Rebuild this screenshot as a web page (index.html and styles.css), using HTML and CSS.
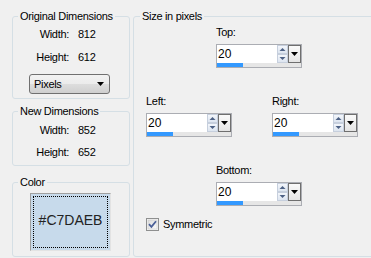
FILE: index.html
```html
<!DOCTYPE html>
<html lang="en">
  <head>
    <meta charset="UTF-8" />
    <title>Add Borders</title>
    <link rel="stylesheet" href="styles.css">
  </head>
  <body>
    <div class="dialog">
      <div class="left-column">
        <div class="group group-original">
          <span class="group-title">Original Dimensions</span>
          <div class="dims">
            <span class="dim-label">Width:</span><span>812</span>
            <span class="dim-label">Height:</span><span>612</span>
          </div>
          <div class="select">
            <span>Pixels</span>
            <svg width="7" height="4" viewBox="0 0 7 4"><path d="M0 0 H7 L3.5 4 Z" fill="#000"/></svg>
          </div>
        </div>

        <div class="group group-new">
          <span class="group-title">New Dimensions</span>
          <div class="dims dims-tight">
            <span class="dim-label">Width:</span><span>852</span>
            <span class="dim-label">Height:</span><span>652</span>
          </div>
        </div>

        <div class="group group-color">
          <span class="group-title">Color</span>
          <div class="swatch">
            <div class="swatch-focus">#C7DAEB</div>
          </div>
        </div>
      </div>

      <div class="group group-size">
        <span class="group-title">Size in pixels</span>

        <div class="field-row row-center">
          <div class="field">
            <label class="field-label">Top:</label>
            <div class="spin">
              <span class="spin-value">20</span>
              <div class="spin-buttons">
                <span class="spin-btn"><svg width="9" height="7" viewBox="0 0 9 7"><path d="M1.5 5 L4.5 2 L7.5 5 Z" fill="#4d6185"/></svg></span>
                <span class="spin-btn"><svg width="9" height="7" viewBox="0 0 9 7"><path d="M1.5 2 L4.5 5 L7.5 2 Z" fill="#4d6185"/></svg></span>
              </div>
              <span class="spin-drop"><svg width="7" height="4" viewBox="0 0 7 4"><path d="M0 0 H7 L3.5 4 Z" fill="#000"/></svg></span>
              <div class="spin-bar"><div class="spin-bar-fill"></div></div>
            </div>
          </div>
        </div>

        <div class="field-row row-sides">
          <div class="field">
            <label class="field-label">Left:</label>
            <div class="spin">
              <span class="spin-value">20</span>
              <div class="spin-buttons">
                <span class="spin-btn"><svg width="9" height="7" viewBox="0 0 9 7"><path d="M1.5 5 L4.5 2 L7.5 5 Z" fill="#4d6185"/></svg></span>
                <span class="spin-btn"><svg width="9" height="7" viewBox="0 0 9 7"><path d="M1.5 2 L4.5 5 L7.5 2 Z" fill="#4d6185"/></svg></span>
              </div>
              <span class="spin-drop"><svg width="7" height="4" viewBox="0 0 7 4"><path d="M0 0 H7 L3.5 4 Z" fill="#000"/></svg></span>
              <div class="spin-bar"><div class="spin-bar-fill"></div></div>
            </div>
          </div>
          <div class="field">
            <label class="field-label">Right:</label>
            <div class="spin">
              <span class="spin-value">20</span>
              <div class="spin-buttons">
                <span class="spin-btn"><svg width="9" height="7" viewBox="0 0 9 7"><path d="M1.5 5 L4.5 2 L7.5 5 Z" fill="#4d6185"/></svg></span>
                <span class="spin-btn"><svg width="9" height="7" viewBox="0 0 9 7"><path d="M1.5 2 L4.5 5 L7.5 2 Z" fill="#4d6185"/></svg></span>
              </div>
              <span class="spin-drop"><svg width="7" height="4" viewBox="0 0 7 4"><path d="M0 0 H7 L3.5 4 Z" fill="#000"/></svg></span>
              <div class="spin-bar"><div class="spin-bar-fill"></div></div>
            </div>
          </div>
        </div>

        <div class="field-row row-center row-bottom">
          <div class="field">
            <label class="field-label">Bottom:</label>
            <div class="spin">
              <span class="spin-value">20</span>
              <div class="spin-buttons">
                <span class="spin-btn"><svg width="9" height="7" viewBox="0 0 9 7"><path d="M1.5 5 L4.5 2 L7.5 5 Z" fill="#4d6185"/></svg></span>
                <span class="spin-btn"><svg width="9" height="7" viewBox="0 0 9 7"><path d="M1.5 2 L4.5 5 L7.5 2 Z" fill="#4d6185"/></svg></span>
              </div>
              <span class="spin-drop"><svg width="7" height="4" viewBox="0 0 7 4"><path d="M0 0 H7 L3.5 4 Z" fill="#000"/></svg></span>
              <div class="spin-bar"><div class="spin-bar-fill"></div></div>
            </div>
          </div>
        </div>

        <div class="check-row">
          <svg class="checkbox" width="13" height="13" viewBox="0 0 13 13">
            <defs>
              <linearGradient id="cbFill" x1="0" y1="0" x2="1" y2="1">
                <stop offset="0" stop-color="#dcdcdc"/>
                <stop offset="1" stop-color="#fafafa"/>
              </linearGradient>
            </defs>
            <rect x="0.5" y="0.5" width="12" height="12" fill="#f4f4f4" stroke="#8e8f8f"/>
            <rect x="2" y="2" width="9" height="9" fill="url(#cbFill)" stroke="#c2c2c2" stroke-width="0.5"/>
            <path d="M3 6.2 L5.4 8.8 L10 3.2" fill="none" stroke="#4a5f97" stroke-width="1.8"/>
          </svg>
          <span>Symmetric</span>
        </div>
      </div>
    </div>
  </body>
</html>
```

FILE: styles.css
```css
body {
  margin: 0;
  width: 371px;
  height: 258px;
  overflow: hidden;
  background-color: #f0f0f0;
  font-family: "Liberation Sans", Arial, sans-serif;
  font-size: 11px;
  letter-spacing: -0.3px;
  color: #000;
}

.dialog {
  display: flex;
  gap: 3px;
  padding: 16px 0 0 12px;
}

.left-column {
  display: flex;
  flex-direction: column;
  width: 118px;
  flex-shrink: 0;
}

/* Group boxes */
.group {
  box-sizing: border-box;
  display: flex;
  flex-direction: column;
  border: 1px solid #d5dfe5;
  border-radius: 3px;
}

.group-title {
  align-self: flex-start;
  margin: -7px 0 0 5px;
  padding: 0 2px;
  line-height: 13px;
  background-color: #f0f0f0;
}

.group-original {
  height: 83px;
}

.group-new {
  height: 55px;
  margin-top: 12px;
}

.group-color {
  height: 75px;
  margin-top: 16px;
}

.group-size {
  width: 250px;
  height: 241px;
  flex-shrink: 0;
}

.group-size .group-title {
  margin-left: 6px;
}

/* Dimension rows */
.dims {
  display: grid;
  grid-template-columns: 56px auto;
  column-gap: 9px;
  row-gap: 10px;
  margin-top: 5px;
  line-height: 13px;
}

.dims-tight {
  row-gap: 9px;
  margin-top: 6px;
}

.dim-label {
  text-align: right;
}

.select {
  box-sizing: border-box;
  display: flex;
  align-items: center;
  justify-content: space-between;
  width: 81px;
  height: 20px;
  margin: 10px 0 0 16px;
  padding: 0 5px 0 4px;
  border: 1px solid #707070;
  border-radius: 3px;
  background: linear-gradient(#f2f2f2 0%, #ebebeb 50%, #dddddd 51%, #cfcfcf 100%);
}

/* Color swatch */
.swatch {
  box-sizing: border-box;
  width: 81px;
  height: 58px;
  margin: 4px 0 0 17px;
  padding: 2px;
  border: 1px solid #a0a0a0;
  border-right-color: #e3e3e3;
  border-bottom-color: #e3e3e3;
  background-color: #c7daeb;
}

.swatch-focus {
  display: flex;
  align-items: center;
  justify-content: center;
  height: 100%;
  box-sizing: border-box;
  border: 1px dotted #000;
  padding-bottom: 4px;
  font-size: 14px;
  letter-spacing: 0;
  color: #222;
}

/* Spin fields */
.field-row {
  display: flex;
  margin-top: 27px;
}

.row-center {
  margin-left: 82px;
}

.group-size .field-row:first-of-type {
  margin-top: 3px;
}

.row-sides {
  gap: 40px;
  margin-left: 12px;
}

.field {
  display: flex;
  flex-direction: column;
}

.field-label {
  line-height: 13px;
  margin-bottom: 5px;
}

.spin {
  box-sizing: border-box;
  display: grid;
  grid-template-columns: 1fr 11px 13px;
  grid-template-rows: 18px 4px;
  width: 86px;
  height: 24px;
  border: 1px solid #abadb3;
  background-color: #fff;
}

.spin-value {
  padding-left: 1px;
  line-height: 18px;
  font-size: 12px;
  letter-spacing: 0;
}

.spin-buttons {
  display: flex;
  flex-direction: column;
}

.spin-btn {
  box-sizing: border-box;
  display: flex;
  align-items: center;
  justify-content: center;
  height: 9px;
  border: 1px solid #c6cfdd;
  background: linear-gradient(#f3f6fb, #dde5f0);
}

.spin-drop {
  box-sizing: border-box;
  display: flex;
  align-items: center;
  justify-content: center;
  border: 1px solid #6f6f6f;
  background: linear-gradient(#fafafa, #e4e4e4);
}

.spin-bar {
  grid-column: 1 / -1;
  background-color: #e6e6e6;
}

.spin-bar-fill {
  width: 26px;
  height: 100%;
  background-color: #3399ff;
}

/* Checkbox */
.check-row {
  display: flex;
  align-items: center;
  gap: 4px;
  margin: 12px 0 0 12px;
  line-height: 13px;
}

.checkbox {
  display: block;
}
```
